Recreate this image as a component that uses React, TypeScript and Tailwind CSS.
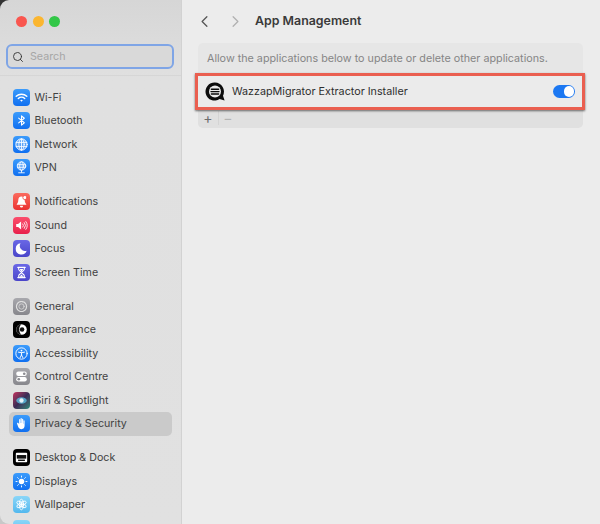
import type { ReactNode } from 'react';
import { Search, ChevronLeft, ChevronRight } from 'lucide-react';

type Item = { label: string; bg: string; icon: ReactNode; active?: boolean };

const glyph = (children: ReactNode) => (
  <svg viewBox="0 0 18 18" className="h-full w-full" fill="none" stroke="white" strokeWidth="1.3" strokeLinecap="round" strokeLinejoin="round">
    {children}
  </svg>
);

const blue = 'bg-gradient-to-b from-[#3b9bfb] to-[#0f6ff0]';
const grey = 'bg-gradient-to-b from-[#a8a8ad] to-[#87878c]';
const indigo = 'bg-gradient-to-b from-[#6a67e6] to-[#4a45c9]';
const sky = 'bg-gradient-to-b from-[#8ad6f8] to-[#52b8ee]';

const groups: Item[][] = [
  [
    {
      label: 'Wi-Fi',
      bg: blue,
      icon: glyph(
        <>
          <path d="M3.400 7.800a8 8 0 0 1 11.200 0" strokeWidth="1.500" />
          <path d="M5.600 10a5 5 0 0 1 6.800 0" strokeWidth="1.500" />
          <path d="M7.600 12a2.200 2.200 0 0 1 2.800 0L9 13.600Z" fill="white" stroke="none" />
        </>,
      ),
    },
    {
      label: 'Bluetooth',
      bg: blue,
      icon: glyph(<path d="M6 6.400 12 11.400 9 14V4l3 2.600-6 5" strokeWidth="1.100" />),
    },
    {
      label: 'Network',
      bg: blue,
      icon: glyph(
        <>
          <circle cx="9" cy="9" r="6" fill="white" fillOpacity="0.25" strokeWidth="1" />
          <ellipse cx="9" cy="9" rx="2.800" ry="6" strokeWidth="0.900" />
          <path d="M3.400 6.800h11.200M3.400 11.200h11.200M9 3v12" strokeWidth="0.900" />
        </>,
      ),
    },
    {
      label: 'VPN',
      bg: blue,
      icon: glyph(
        <>
          <circle cx="9" cy="7.400" r="4.500" fill="white" fillOpacity="0.25" strokeWidth="0.900" />
          <ellipse cx="9" cy="7.400" rx="2" ry="4.500" strokeWidth="0.800" />
          <path d="M4.800 6h8.400M4.800 8.800h8.400M9 12v2M6 14.600h6" strokeWidth="0.900" />
        </>,
      ),
    },
  ],
  [
    {
      label: 'Notifications',
      bg: 'bg-gradient-to-b from-[#fb6a5e] to-[#ea2f30]',
      icon: glyph(
        <>
          <path d="M9 3.600c-2.400 0-3.400 1.800-3.400 4 0 2-.8 3.200-1.600 4.100v.7h10v-.7c-.8-.9-1.600-2.100-1.600-4.100 0-2.200-1-4-3.400-4Z" fill="white" stroke="none" />
          <path d="M7.500 13.400h3v.5a1.500 1.500 0 0 1-3 0Z" fill="white" stroke="none" />
          <circle cx="12.600" cy="4.800" r="2.200" fill="white" stroke="#f0453f" strokeWidth="0.800" />
        </>,
      ),
    },
    {
      label: 'Sound',
      bg: 'bg-gradient-to-b from-[#fb4d6c] to-[#e81f4b]',
      icon: glyph(
        <>
          <path d="M3.400 7.400h2l3.200-2.700v8.600l-3.200-2.700h-2Z" fill="white" stroke="none" />
          <path d="M10.400 7.300a2.600 2.600 0 0 1 0 3.400M12 5.900a4.800 4.800 0 0 1 0 6.200M13.600 4.800a7 7 0 0 1 0 8.400" strokeWidth="0.900" />
        </>,
      ),
    },
    {
      label: 'Focus',
      bg: indigo,
      icon: glyph(<path d="M8 3.400a6 6 0 1 0 6.500 8 5.500 5.500 0 0 1-6.500-8Z" fill="white" stroke="none" />),
    },
    {
      label: 'Screen Time',
      bg: indigo,
      icon: glyph(
        <>
          <path d="M5.200 3.600h7.600M5.200 14.400h7.600" strokeWidth="1.500" />
          <path d="M6 4v1.600c0 1.500 3 2.400 3 3.400s-3 1.900-3 3.400V14h6v-1.600c0-1.500-3-2.400-3-3.400s3-1.900 3-3.400V4" strokeWidth="1.100" />
          <path d="M6.800 13.400 9 11.200l2.200 2.200ZM7 5.400h4L9 8Z" fill="white" stroke="none" />
        </>,
      ),
    },
  ],
  [
    {
      label: 'General',
      bg: grey,
      icon: glyph(
        <>
          <circle cx="9" cy="9" r="5.300" strokeWidth="1.300" stroke="#dedede" strokeDasharray="1.600 0.500" />
          <circle cx="9" cy="9" r="2.800" strokeWidth="0.800" stroke="#dedede" />
        </>,
      ),
    },
    {
      label: 'Appearance',
      bg: 'bg-black',
      icon: glyph(
        <>
          <circle cx="9" cy="9" r="5.600" fill="white" stroke="none" />
          <path d="M9 3.400a5.600 5.600 0 0 0 0 11.200c-1.600-1.400-2.400-3.300-2.400-5.600S7.400 4.800 9 3.400Z" fill="#111" stroke="none" />
          <circle cx="9.600" cy="9" r="2.400" fill="#111" stroke="none" />
        </>,
      ),
    },
    {
      label: 'Accessibility',
      bg: blue,
      icon: glyph(
        <>
          <circle cx="9" cy="9" r="6" strokeWidth="1" />
          <circle cx="9" cy="5.900" r="1" fill="white" stroke="none" />
          <path d="M5.800 7.600 9 8.200l3.200-.6M9 8.200v2.400M9 10.600l-1.500 2.800M9 10.600l1.500 2.800" strokeWidth="1" />
        </>,
      ),
    },
    {
      label: 'Control Centre',
      bg: grey,
      icon: glyph(
        <>
          <rect x="3.400" y="3.800" width="11.200" height="4.600" rx="2.300" fill="white" stroke="none" />
          <rect x="3.400" y="9.600" width="11.200" height="4.600" rx="2.300" fill="white" stroke="none" />
          <circle cx="11.900" cy="6.100" r="1.400" fill="#8d8d92" stroke="none" />
          <circle cx="6.100" cy="11.900" r="1.400" fill="#8d8d92" stroke="none" />
        </>,
      ),
    },
    {
      label: 'Siri & Spotlight',
      bg: 'bg-gradient-to-br from-[#c8285c] via-[#3a2a55] to-[#1d8a78]',
      icon: glyph(
        <>
          <ellipse cx="9" cy="9" rx="5.500" ry="3.400" fill="#59c6e8" stroke="none" opacity="0.750" />
          <circle cx="9" cy="9" r="2.300" fill="white" stroke="none" opacity="0.850" />
        </>,
      ),
    },
    {
      label: 'Privacy & Security',
      bg: blue,
      active: true,
      icon: glyph(
        <path
          d="M4.400 9.400c-.5-.9.600-1.500 1.200-.8l.9 1V4.900c0-.9 1.200-.9 1.200 0V8.500H8V3.800c0-.9 1.300-.9 1.300 0v4.700h.3V4.600c0-.9 1.200-.9 1.200 0v4.700h.3V6.300c0-.9 1.200-.9 1.200 0v5.200c0 2.100-1.200 3.500-3.300 3.500-1.700 0-2.700-.8-3.400-2.200Z"
          fill="white"
          stroke="none"
        />,
      ),
    },
  ],
  [
    {
      label: 'Desktop & Dock',
      bg: 'bg-black',
      icon: glyph(
        <>
          <rect x="3" y="4" width="12" height="10" rx="1" fill="white" stroke="none" />
          <rect x="4" y="6.400" width="10" height="3.800" fill="#111" stroke="none" />
          <rect x="5.400" y="11.200" width="7.200" height="1.500" fill="#111" stroke="none" />
        </>,
      ),
    },
    {
      label: 'Displays',
      bg: blue,
      icon: glyph(
        <>
          <circle cx="9" cy="9" r="2.900" fill="white" stroke="none" />
          <path d="M9 3.200v1.100M9 13.700v1.100M3.200 9h1.100M13.700 9h1.100M4.900 4.900l.8.800M12.300 12.300l.8.800M4.900 13.100l.8-.8M12.300 5.700l.8-.8" strokeWidth="1" />
        </>,
      ),
    },
    {
      label: 'Wallpaper',
      bg: sky,
      icon: glyph(
        <>
          <ellipse cx="9" cy="9" rx="2.200" ry="5.600" strokeWidth="0.900" />
          <ellipse cx="9" cy="9" rx="2.200" ry="5.600" strokeWidth="0.900" transform="rotate(60 9 9)" />
          <ellipse cx="9" cy="9" rx="2.200" ry="5.600" strokeWidth="0.900" transform="rotate(120 9 9)" />
          <circle cx="9" cy="9" r="1.500" fill="white" stroke="none" />
        </>,
      ),
    },
    { label: '', bg: sky, icon: null },
  ],
];

function SidebarRow({ item }: { item: Item }) {
  return (
    <div className={`ml-[8.5px] mr-[9.5px] flex h-[23.5px] items-center gap-[4.5px] rounded-[5px] pl-[4.5px] ${item.active ? 'bg-[#cacaca]' : ''}`}>
      <div className={`h-[17px] w-[17px] shrink-0 overflow-hidden rounded-[4px] ${item.bg}`}>{item.icon}</div>
      <span className="whitespace-nowrap pt-[2px] text-[10.7px] leading-none text-[#424242]">{item.label}</span>
    </div>
  );
}

export default function App() {
  return (
    <div className="flex h-[524px] w-[600px] overflow-hidden bg-[linear-gradient(#333333_0_12px,#c8c8c8_12px)] font-['Inter','Liberation_Sans',sans-serif]">
      <aside className="flex h-full w-[182px] shrink-0 flex-col overflow-hidden rounded-l-[9px] border-r border-[#d2d2d2] bg-gradient-to-b from-[#d6d6d6] via-[#e0e0e0] via-[15%] to-[#e1e1e1]">
        <div className="flex shrink-0 gap-[5.5px] pl-[16px] pt-[16px]">
          <span className="h-[11px] w-[11px] rounded-full bg-[#f9564f]" />
          <span className="h-[11px] w-[11px] rounded-full bg-[#fbb630]" />
          <span className="h-[11px] w-[11px] rounded-full bg-[#33c748]" />
        </div>
        <div className="ml-[6px] mr-[7px] mt-[17px] flex h-[25px] shrink-0 items-center gap-[6px] rounded-[6px] border-[2.5px] border-[#7fa5e6] bg-[#d9d9d9] pl-[4px]">
          <Search size={12} strokeWidth={1.8} className="text-[#333333]" />
          <span className="pt-[2px] text-[10.7px] leading-none text-[#a6a6a6]">Search</span>
        </div>
        <div className="mt-[6px] h-px shrink-0 bg-[#d6d6d6]" />
        <nav className="flex shrink-0 flex-col gap-[10.5px] pt-[9.5px]">
          {groups.map((group) => (
            <div key={group[0].label}>
              {group.map((item) => (
                <SidebarRow key={item.label} item={item} />
              ))}
            </div>
          ))}
        </nav>
      </aside>

      <main className="min-w-0 flex-1 bg-[#ececec]">
        <header className="flex h-[43px] items-center pl-[13px]">
          <ChevronLeft size={19} strokeWidth={1.6} className="text-[#555555]" />
          <ChevronRight size={19} strokeWidth={1.6} className="ml-[12px] text-[#b0b0b0]" />
          <h1 className="ml-[10px] text-[12.4px] font-semibold text-[#3a3a3a]">App Management</h1>
        </header>

        <section className="relative ml-[16px] w-[385px] rounded-[5px] bg-[#e6e6e6]">
          <p className="flex h-[32px] items-center pl-[9px] pt-[1px] text-[10.75px] text-[#858585]">
            Allow the applications below to update or delete other applications.
          </p>
          <div className="flex h-[33px] items-center bg-[#ebebeb] pl-[7px] pr-[8px]">
            <svg viewBox="0 0 20 20" className="h-[20px] w-[20px] shrink-0">
              <path d="M10 .6a9 9 0 0 1 8 13.100l1.600 4.900-5-1.600A9 9 0 1 1 10 .6Z" fill="#0d0d0d" />
              <circle cx="10" cy="9.600" r="6" fill="#ebebeb" />
              <path d="M6.400 7.200h7.200M6 9.600h8M6.400 12h7.200" stroke="#0d0d0d" strokeWidth="1.400" strokeLinecap="round" />
            </svg>
            <span className="ml-[7px] pt-[1px] text-[10.75px] text-[#2e2e2e]">WazzapMigrator Extractor Installer</span>
            <div className="ml-auto flex h-[12.5px] w-[22px] items-center justify-end rounded-full bg-[#1c78f2] pr-[1px]">
              <span className="h-[10.5px] w-[10.5px] rounded-full bg-white" />
            </div>
          </div>
          <div className="flex h-[20px] items-center rounded-b-[5px] bg-[#e0e0e0] text-[#6e6e6e]">
            <span className="flex w-[21px] items-center justify-center border-r border-[#d4d4d4] text-[14px] leading-none">+</span>
            <span className="flex w-[18px] items-center justify-center text-[14px] leading-none text-[#b4b4b4]">−</span>
          </div>
          {/* annotation box drawn over the row */}
          <div className="absolute left-[-3px] top-[29.5px] h-[37px] w-[390px] border-[3.5px] border-[#ea5f50] shadow-[0_1px_2px_rgba(0,0,0,0.55)]" />
        </section>
      </main>
    </div>
  );
}
